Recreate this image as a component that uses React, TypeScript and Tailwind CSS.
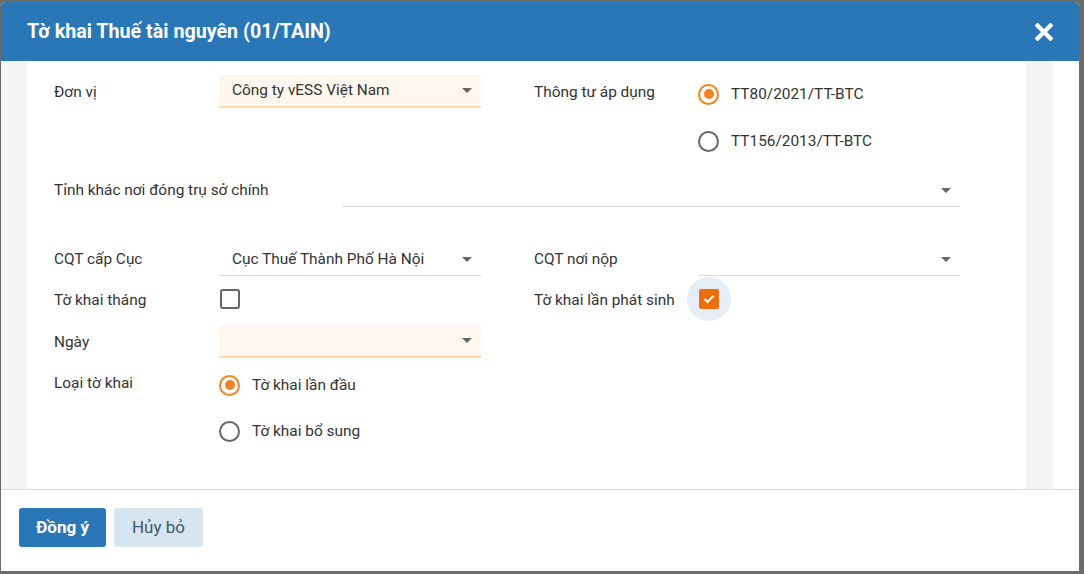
import React from 'react';

const font = { fontFamily: 'Roboto, "Noto Sans", Arial, sans-serif' };

function Caret() {
  return (
    <svg width="10" height="5" viewBox="0 0 10 5" className="shrink-0">
      <path d="M0 0 L10 0 L5 5 Z" fill="#666" />
    </svg>
  );
}

function Select({ value, width, tone }: { value?: string; width: string; tone: 'orange' | 'plain' }) {
  const toneCls =
    tone === 'orange'
      ? 'bg-[#fff7ee] border-b-2 border-[#fbd9a8]'
      : 'bg-white border-b border-[#dcdcdc]';
  return (
    <div className={`${width} h-[33px] flex items-center justify-between pl-[13px] pr-[9px] ${toneCls}`}>
      <span className="text-[15.4px] text-[#333] pt-[1px]">{value}</span>
      <Caret />
    </div>
  );
}

function Radio({ checked, label }: { checked?: boolean; label: string }) {
  return (
    <div className="h-[38px] flex items-center gap-[12px]">
      <span
        className={`w-[21px] h-[21px] rounded-full border-2 flex items-center justify-center ${
          checked ? 'border-[#f58220]' : 'border-[#666]'
        }`}
      >
        {checked && <span className="w-[10px] h-[10px] rounded-full bg-[#f58220]" />}
      </span>
      <span className="text-[15.4px] text-[#333] pt-[2px]">{label}</span>
    </div>
  );
}

function Label({ children, width = 'w-[165px]' }: { children: React.ReactNode; width?: string }) {
  return <div className={`${width} shrink-0 text-[15.4px] text-[#333]`}>{children}</div>;
}

export default function App() {
  return (
    <div className="w-[1084px] h-[574px] bg-[#6b6b6b] pt-[2px] pl-[1px] overflow-hidden" style={font}>
      <div className="w-[1078px] h-[569px] bg-white rounded-t-[5px] flex flex-col overflow-hidden">
        {/* header */}
        <div className="h-[59px] bg-[#2a77b8] flex items-center justify-between pl-[26px] pr-[26px] shrink-0">
          <h1 className="text-white font-bold text-[19.7px]">Tờ khai Thuế tài nguyên (01/TAIN)</h1>
          <svg width="18" height="18" viewBox="0 0 18 18">
            <path d="M2.5 2.5 L15.5 15.5 M15.5 2.5 L2.5 15.5" stroke="white" strokeWidth="4.2" strokeLinecap="square" />
          </svg>
        </div>

        {/* body */}
        <div className="h-[428px] flex shrink-0">
          <div className="w-[26px] bg-[#f4f4f4]" />
          <div className="w-[999px] bg-[#f4f4f4] pt-[1px]">
            <div className="h-full bg-white rounded-[4px] pl-[27px] pt-[13px]">
              {/* row 1 */}
              <div className="flex">
                <div className="flex items-start">
                  <Label>
                    <div className="h-[35px] flex items-center">Đơn vị</div>
                  </Label>
                  <Select value="Công ty vESS Việt Nam" width="w-[262px]" tone="orange" />
                </div>
                <div className="flex ml-[53px]">
                  <Label width="w-[164px]">
                    <div className="h-[35px] flex items-center">Thông tư áp dụng</div>
                  </Label>
                  <div className="flex flex-col gap-[9px]">
                    <Radio checked label="TT80/2021/TT-BTC" />
                    <Radio label="TT156/2013/TT-BTC" />
                  </div>
                </div>
              </div>

              {/* row 2 */}
              <div className="flex items-center mt-[14px]">
                <Label width="w-[288px]">Tỉnh khác nơi đóng trụ sở chính</Label>
                <Select width="w-[618px]" tone="plain" />
              </div>

              {/* row 3 */}
              <div className="flex items-center mt-[36px]">
                <Label>CQT cấp Cục</Label>
                <Select value="Cục Thuế Thành Phố Hà Nội" width="w-[262px]" tone="plain" />
                <div className="ml-[53px] flex items-center">
                  <Label width="w-[164px]">CQT nơi nộp</Label>
                  <Select width="w-[262px]" tone="plain" />
                </div>
              </div>

              {/* row 4 */}
              <div className="flex items-center h-[44px] mt-[1px]">
                <Label>
                  <div className="pt-[3px]">Tờ khai tháng</div>
                </Label>
                <div className="w-[262px]">
                  <span className="block w-[20px] h-[20px] ml-[1px] border-2 border-[#666] rounded-[3px]" />
                </div>
                <div className="ml-[53px] flex items-center">
                  <Label width="w-[153px]">
                    <div className="pt-[3px]">Tờ khai lần phát sinh</div>
                  </Label>
                  <span className="w-[44px] h-[44px] rounded-full bg-[#e6edf6] flex items-center justify-center">
                    <span className="w-[20px] h-[20px] rounded-[2px] bg-[#f06e0a] flex items-center justify-center">
                      <svg width="12" height="10" viewBox="0 0 12 10">
                        <path d="M1.5 5 L4.5 8 L10.5 1.8" fill="none" stroke="white" strokeWidth="2" />
                      </svg>
                    </span>
                  </span>
                </div>
              </div>

              {/* row 5 */}
              <div className="flex items-center mt-[4px]">
                <Label>
                  <div className="pt-[2px]">Ngày</div>
                </Label>
                <Select width="w-[262px]" tone="orange" />
              </div>

              {/* row 6 */}
              <div className="flex items-start mt-[8px]">
                <Label>
                  <div className="pt-[7px] leading-5">Loại tờ khai</div>
                </Label>
                <div className="flex flex-col gap-[8px]">
                  <Radio checked label="Tờ khai lần đầu" />
                  <Radio label="Tờ khai bổ sung" />
                </div>
              </div>
            </div>
          </div>
          <div className="w-[27px] bg-[#f4f4f4]" />
          <div className="flex-1 bg-white" />
        </div>

        {/* footer */}
        <div className="flex-1 border-t border-[#dedede] flex items-start gap-[8px] pl-[18px] pt-[18px]">
          <button className="w-[87px] h-[39px] rounded-[3px] bg-[#2a77b8] text-white font-bold text-[17px]">
            Đồng ý
          </button>
          <button className="w-[89px] h-[39px] rounded-[3px] bg-[#d7e5f1] text-[#44576a] text-[17px]">
            Hủy bỏ
          </button>
        </div>
      </div>
    </div>
  );
}
